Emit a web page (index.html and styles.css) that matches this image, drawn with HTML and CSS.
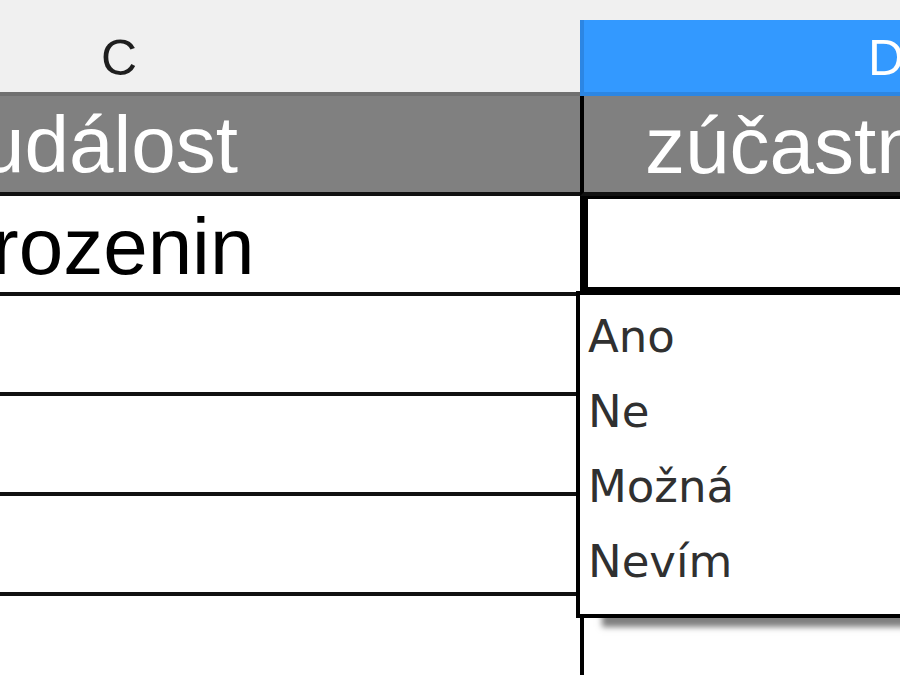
FILE: index.html
```html
<!DOCTYPE html>
<html lang="cs">
<head>
<meta charset="utf-8">
<title>Výběr ze seznamu</title>
<link rel="stylesheet" href="styles.css">
</head>
<body>
<div class="sheet">
  <div class="strip"></div>
  <div class="colhead">C</div>
  <div class="colhead sel">D</div>

  <div class="cell c head">událost</div>
  <div class="cell d head">zúčastníte se</div>

  <div class="cell c data">rozenin</div>
  <div class="cell d cursor"></div>

  <div class="cell c"></div>
  <div class="cell d"></div>

  <div class="cell c"></div>
  <div class="cell d"></div>

  <div class="cell c"></div>
  <div class="cell d"></div>

  <div class="cell c"></div>
  <div class="cell d"></div>
</div>

<ul class="popup">
  <li>Ano</li>
  <li>Ne</li>
  <li>Možná</li>
  <li>Nevím</li>
</ul>
</body>
</html>
```
FILE: styles.css
```css
html, body {
  margin: 0;
  padding: 0;
  width: 900px;
  height: 675px;
  overflow: hidden;
  background: #ffffff;
}

.sheet {
  display: grid;
  grid-template-columns: 580px 620px;
  grid-template-rows: 20px 76px 100px 100px 100px 100px 100px 100px;
}

.strip {
  grid-column: 1 / -1;
  background: #f0f0f0;
}

.colhead {
  box-sizing: border-box;
  background: #f0f0f0;
  color: #1e1e1e;
  border-bottom: 4px solid #707070;
  font: 50px/56px "Liberation Sans", Arial, sans-serif;
  padding: 10px 0 0 101px;
  overflow: hidden;
  white-space: nowrap;
}

.colhead.sel {
  background: #3399ff;
  color: #ffffff;
  border-left: 4px solid #2c86e3;
  border-bottom-color: #2c86e3;
  padding-left: 284px;
}

.cell {
  box-sizing: border-box;
  border-bottom: 4px solid #111111;
  overflow: hidden;
  white-space: nowrap;
  font: 80px/96px "Liberation Sans", Arial, sans-serif;
  color: #000000;
}

.cell.d {
  border-left: 4px solid #000000;
}

.head {
  background: #808080;
  color: #ffffff;
  padding-top: 1px;
}

.c.head {
  text-indent: -20px;
}

.d.head {
  padding-left: 61px;
  padding-top: 2px;
}

.data {
  text-indent: -8px;
  padding-top: 3px;
}

.cursor {
  position: relative;
}

.cursor::after {
  content: "";
  position: absolute;
  top: -4px;
  left: -4px;
  right: -4px;
  bottom: -3px;
  border-style: solid;
  border-color: #000000;
  border-width: 7px 8px 8px 8px;
}

.popup {
  position: absolute;
  left: 576px;
  top: 291px;
  width: 700px;
  margin: 0;
  padding: 4px 0 15px 8px;
  list-style: none;
  background: #ffffff;
  border: 4px solid #000000;
  box-shadow: 26px 9px 6px rgba(0, 0, 0, 0.5);
  font: 45px/75px "DejaVu Sans", sans-serif;
  color: #303030;
}

.popup li {
  margin: 0;
  padding: 0;
}
```
